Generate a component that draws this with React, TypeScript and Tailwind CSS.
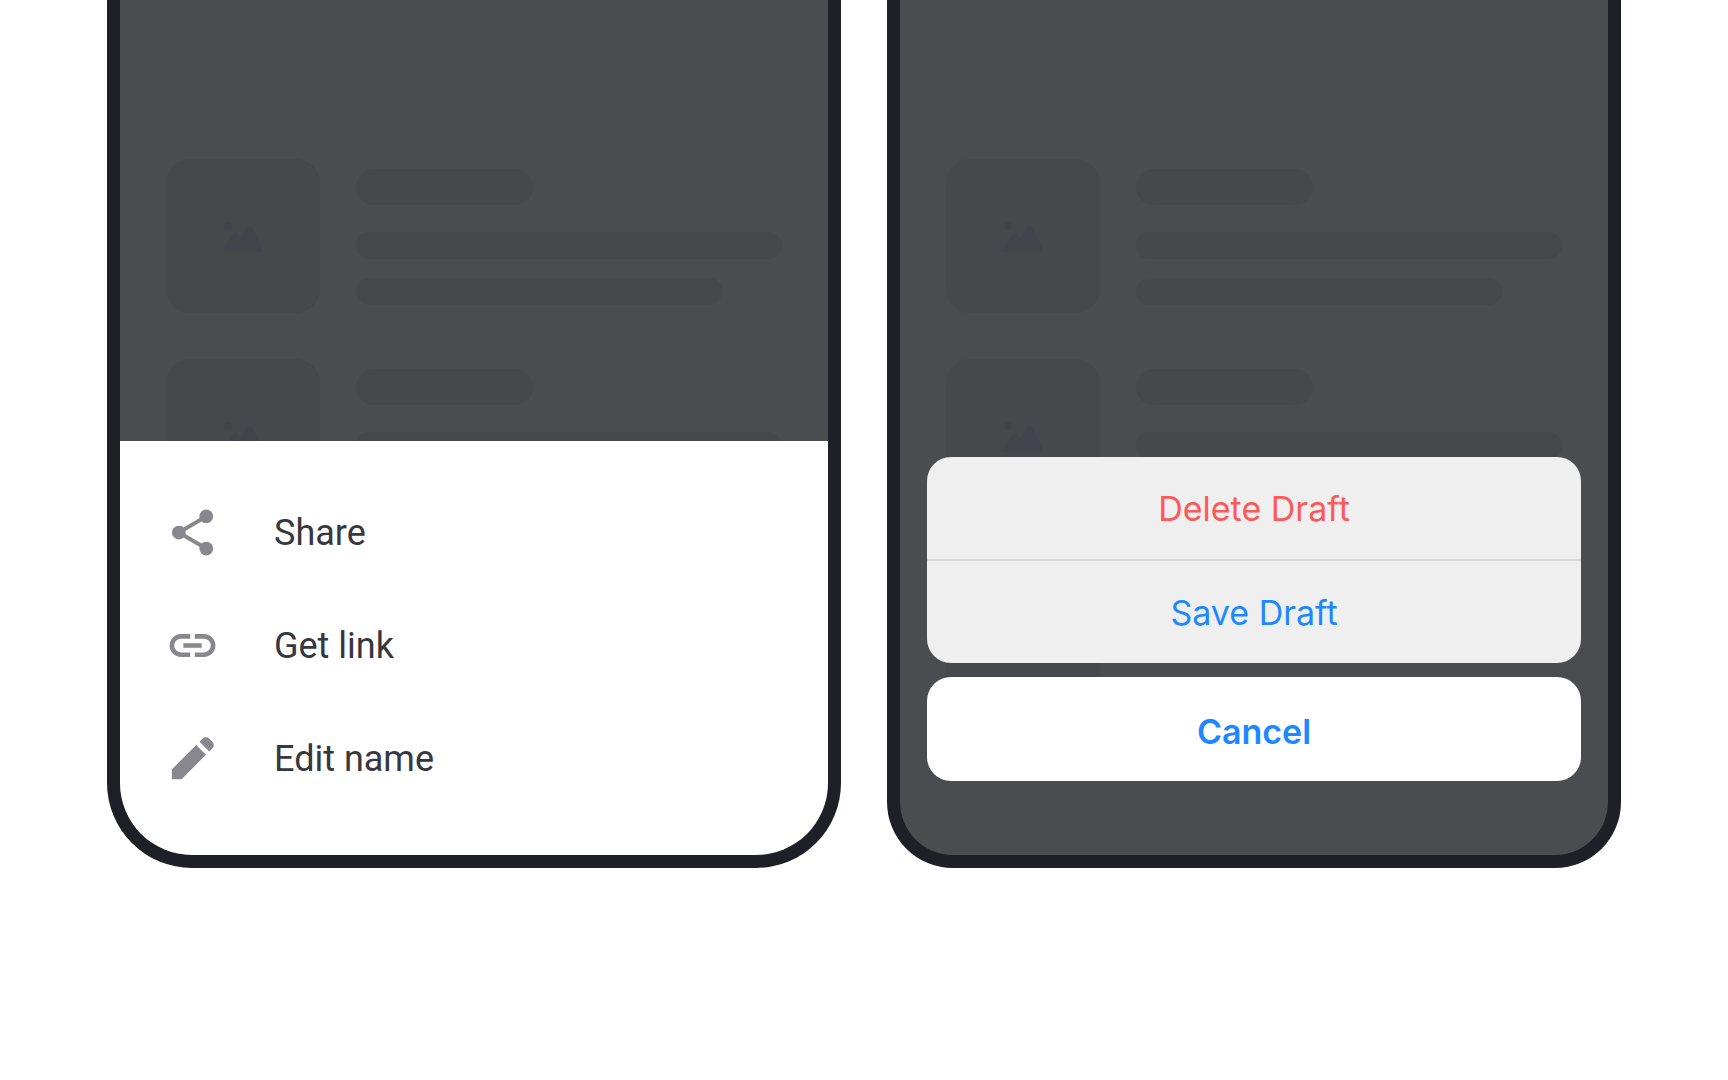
import type { ReactNode } from 'react';
import { clsx } from 'clsx';

const menuItems = [
  {
    label: 'Share',
    path: 'M18 22q-1.25 0-2.125-.875T15 19q0-.175.025-.363.025-.187.075-.337l-7.05-4.1q-.425.375-.95.587Q6.575 15 6 15q-1.25 0-2.125-.875T3 12q0-1.25.875-2.125T6 9q.575 0 1.1.212.525.213.95.588l7.05-4.1q-.05-.15-.075-.337Q15 5.175 15 5q0-1.25.875-2.125T18 2q1.25 0 2.125.875T21 5q0 1.25-.875 2.125T18 8q-.575 0-1.1-.213-.525-.212-.95-.587L8.9 11.3q.05.15.075.337Q9 11.825 9 12q0 .175-.025.362-.025.188-.075.338l7.05 4.1q.425-.375.95-.588Q17.425 16 18 16q1.25 0 2.125.875T21 19q0 1.25-.875 2.125T18 22Z',
  },
  {
    label: 'Get link',
    path: 'M11 17H7q-2.075 0-3.537-1.463Q2 14.075 2 12t1.463-3.538Q4.925 7 7 7h4v2H7q-1.25 0-2.125.875T4 12q0 1.25.875 2.125T7 15h4Zm-3-4v-2h8v2Zm5 4v-2h4q1.25 0 2.125-.875T20 12q0-1.25-.875-2.125T17 9h-4V7h4q2.075 0 3.538 1.462Q22 9.925 22 12q0 2.075-1.462 3.537Q19.075 17 17 17Z',
  },
  {
    label: 'Edit name',
    path: 'M19.3 8.925l-4.25-4.2 1.4-1.4q.575-.575 1.413-.575.837 0 1.412.575l1.4 1.4q.575.575.6 1.388.025.812-.55 1.387ZM17.85 10.4 7.25 21H3v-4.25l10.6-10.6Z',
  },
];

const SkeletonRow = () => (
  <div className="flex gap-9">
    <div className="flex size-[154px] shrink-0 items-center justify-center rounded-3xl bg-[#47484c]">
      <svg viewBox="0 0 40 32" className="h-8 w-10">
        <circle cx="5" cy="6" r="3.7" fill="#434449" />
        <path
          d="M3.8 32C1 32 0 30 1.2 27.6L9 15.2Q12 10.6 15 15.2L17.3 18.6 22.8 8.8Q26 4.4 29.2 8.8L38.8 27.6C40 30 39 32 36.2 32Z"
          fill="#43444c"
        />
      </svg>
    </div>
    <div className="flex-1 pt-[10px]">
      <div className="h-9 w-[177px] rounded-full bg-[#47484c]" />
      <div className="mt-[27px] h-[27px] rounded-full bg-[#47484c]" />
      <div className="mt-[19px] h-[27px] w-[86%] rounded-full bg-[#47484c]" />
    </div>
  </div>
);

const Phone = ({ className, children }: { className: string; children: ReactNode }) => (
  <section
    className={clsx('relative flex-1 overflow-hidden border-x-[13px] border-b-[13px] border-[#1f1f27] bg-[#4b4c50]', className)}
  >
    <div className="flex flex-col gap-[46px] px-[46px] pt-[159px] pb-[142px]" aria-hidden="true">
      <SkeletonRow />
      <SkeletonRow />
      <SkeletonRow />
    </div>
    {children}
  </section>
);

const BottomSheet = () => (
  <div className="absolute inset-x-0 bottom-0 bg-white pt-[35px] pb-[40px] font-['Roboto',sans-serif]">
    {menuItems.map((item) => (
      <button
        key={item.label}
        type="button"
        className="flex h-[113px] w-full items-center gap-[54px] pl-[45px] text-left text-[36px] text-[#36373f]"
      >
        <svg viewBox="0 0 24 24" className="size-[55px]" fill="#88878d">
          <path d={item.path} />
        </svg>
        {item.label}
      </button>
    ))}
  </div>
);

const ActionSheet = () => (
  <div className="absolute inset-x-[27px] bottom-[74px] flex flex-col gap-[14px] font-['Inter',sans-serif] text-[34px] text-[#1f87ff]">
    <div className="overflow-hidden rounded-3xl bg-[#efefef]">
      <button type="button" className="block h-[102px] w-full text-[#fc5a5a]">
        Delete Draft
      </button>
      <hr className="border-t-2 border-[#d9d9d9]" />
      <button type="button" className="block h-[102px] w-full">
        Save Draft
      </button>
    </div>
    <button type="button" className="h-[104px] rounded-3xl bg-white pt-1 font-semibold">
      Cancel
    </button>
  </div>
);

export default function App() {
  return (
    <main className="flex min-h-screen items-start gap-[46px] bg-white px-[107px]">
      <Phone className="rounded-b-[85px]">
        <BottomSheet />
      </Phone>
      <Phone className="rounded-b-[66px]">
        <ActionSheet />
      </Phone>
    </main>
  );
}
